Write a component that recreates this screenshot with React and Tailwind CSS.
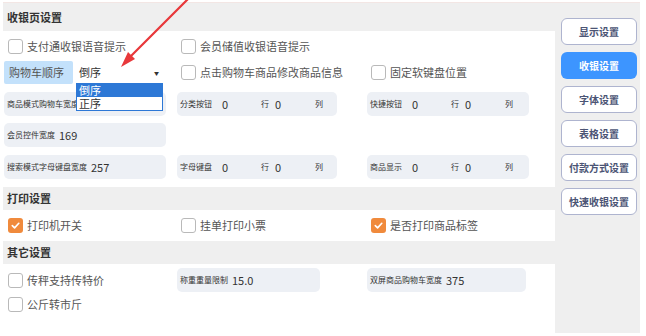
import React from "react";

const Check = ({ checked, label }) => (
  <div className="flex items-center gap-[4px] pl-[4px] h-full">
    {checked ? (
      <span className="w-[15px] h-[15px] rounded-[3px] bg-[#f08a3c] flex items-center justify-center">
        <svg width="11" height="11" viewBox="0 0 12 12">
          <path d="M2.5 6.2 L5 8.6 L9.6 3.6" fill="none" stroke="#fff" strokeWidth="1.8" strokeLinecap="round" strokeLinejoin="round" />
        </svg>
      </span>
    ) : (
      <span className="w-[15px] h-[15px] rounded-[3px] border border-[#b9b9b9] bg-white" />
    )}
    <span className="text-[11px] text-[#555]">{label}</span>
  </div>
);

const Box = ({ children, w }) => (
  <div className={`${w} h-[24px] rounded-[5px] bg-[#edf0f5] flex items-center pl-[3px] text-[#333] whitespace-nowrap overflow-hidden`}>
    {children}
  </div>
);

const GridBox = ({ label, w = "w-[162px]" }) => (
  <Box w={w}>
    <span className="w-[42px] text-[8px]">{label}</span>
    <span className="w-[39px] text-[11px]">0</span>
    <span className="w-[14px] text-[8px]">行</span>
    <span className="w-[40px] text-[11px]">0</span>
    <span className="text-[8px]">列</span>
  </Box>
);

const ValBox = ({ label, value, w = "w-[162px]" }) => (
  <Box w={w}>
    <span className="text-[8px] mr-[4px]">{label}</span>
    <span className="text-[11px]">{value}</span>
  </Box>
);

const Header = ({ title, h }) => (
  <div className={`${h} flex items-center pl-[4px] text-[11px] font-bold text-[#333]`}>{title}</div>
);

const Row = ({ className = "", children }) => (
  <div className={`grid grid-cols-[173px_190px_1fr] items-center ${className}`}>{children}</div>
);

const navs = ["显示设置", "收银设置", "字体设置", "表格设置", "付款方式设置", "快速收银设置"];

export default function App() {
  return (
    <div className="w-[646px] h-[336px] bg-white relative overflow-hidden font-['Noto_Sans_CJK_SC','Noto_Sans',sans-serif]">
      <div className="ml-[3px] mt-[2px] w-[637px] h-[331px] border-t border-[#f3e6e4] bg-[#efefef] flex">
        <div className="w-[552px] flex flex-col">
          <Header title="收银页设置" h="h-[28px]" />
          <div className="h-[156px] bg-white pl-[1px] pt-[4px]">
            <Row className="h-[22px]">
              <Check label="支付通收银语音提示" />
              <Check label="会员储值收银语音提示" />
              <div />
            </Row>
            <Row className="h-[23px] mt-[4px]">
              <div className="flex h-full items-center">
                <div className="w-[69px] h-full bg-[#c3e1fb] rounded-[2px] flex items-center pl-[5px] text-[11px] text-[#555]">购物车顺序</div>
                <div className="relative ml-[2px] w-[90px] h-full bg-white flex items-center pl-[4px] text-[11px] text-[#333] z-10">
                  倒序
                  <span className="absolute right-[6px] top-[8px] text-[5px] text-[#333]">▼</span>
                  <div className="absolute left-[1px] top-[22px] w-[87px] h-[28px] border border-[#2d78d6] bg-white flex flex-col text-[11px] leading-[13px]">
                    <div className="h-[13px] bg-[#2d78d6] text-white pl-[2px]">倒序</div>
                    <div className="flex-1 pl-[2px] text-[#333]">正序</div>
                  </div>
                </div>
              </div>
              <Check label="点击购物车商品修改商品信息" />
              <Check label="固定软键盘位置" />
            </Row>
            <Row className="h-[24px] mt-[8px]">
              <Box w="w-[162px]">
                <span className="w-[70px] overflow-hidden text-[8px]">商品模式购物车宽度</span>
              </Box>
              <GridBox label="分类按钮" w="w-[160px]" />
              <GridBox label="快捷按钮" />
            </Row>
            <Row className="h-[24px] mt-[7px]">
              <ValBox label="会员控件宽度" value="169" />
            </Row>
            <Row className="h-[24px] mt-[8px]">
              <ValBox label="搜索模式字母键盘宽度" value="257" />
              <GridBox label="字母键盘" w="w-[160px]" />
              <GridBox label="商品显示" />
            </Row>
          </div>
          <Header title="打印设置" h="h-[23px]" />
          <div className="h-[31px] bg-white pl-[1px]">
            <Row className="h-full">
              <Check checked label="打印机开关" />
              <Check label="挂单打印小票" />
              <Check checked label="是否打印商品标签" />
            </Row>
          </div>
          <Header title="其它设置" h="h-[23px]" />
          <div className="flex-1 bg-white pl-[1px] pt-[4px]">
            <Row className="h-[24px]">
              <Check label="传秤支持传特价" />
              <ValBox label="称重重量限制" value="15.0" w="w-[143px]" />
              <ValBox label="双屏商品购物车宽度" value="375" w="w-[159px]" />
            </Row>
            <Row className="h-[24px]">
              <Check label="公斤转市斤" />
            </Row>
          </div>
        </div>
        <div className="flex-1 flex flex-col gap-[7px] pt-[15px] pl-[6px]">
          {navs.map((n) => (
            <div
              key={n}
              className={
                n === "收银设置"
                  ? "w-[76px] h-[27px] rounded-[6px] bg-[#3d95ff] text-white text-[10px] font-semibold flex items-center justify-center"
                  : "w-[76px] h-[27px] rounded-[6px] border border-[#aeb4cf] bg-white text-[#4b5474] text-[10px] font-semibold flex items-center justify-center"
              }
            >
              {n}
            </div>
          ))}
        </div>
      </div>
      <svg className="absolute left-0 top-0 pointer-events-none z-20" width="646" height="336">
        <line x1="189" y1="-2" x2="129" y2="58" stroke="#e8383b" strokeWidth="2.2" strokeLinecap="round" />
        <polygon points="121,67 135,59 128,52" fill="#e8383b" />
      </svg>
    </div>
  );
}
